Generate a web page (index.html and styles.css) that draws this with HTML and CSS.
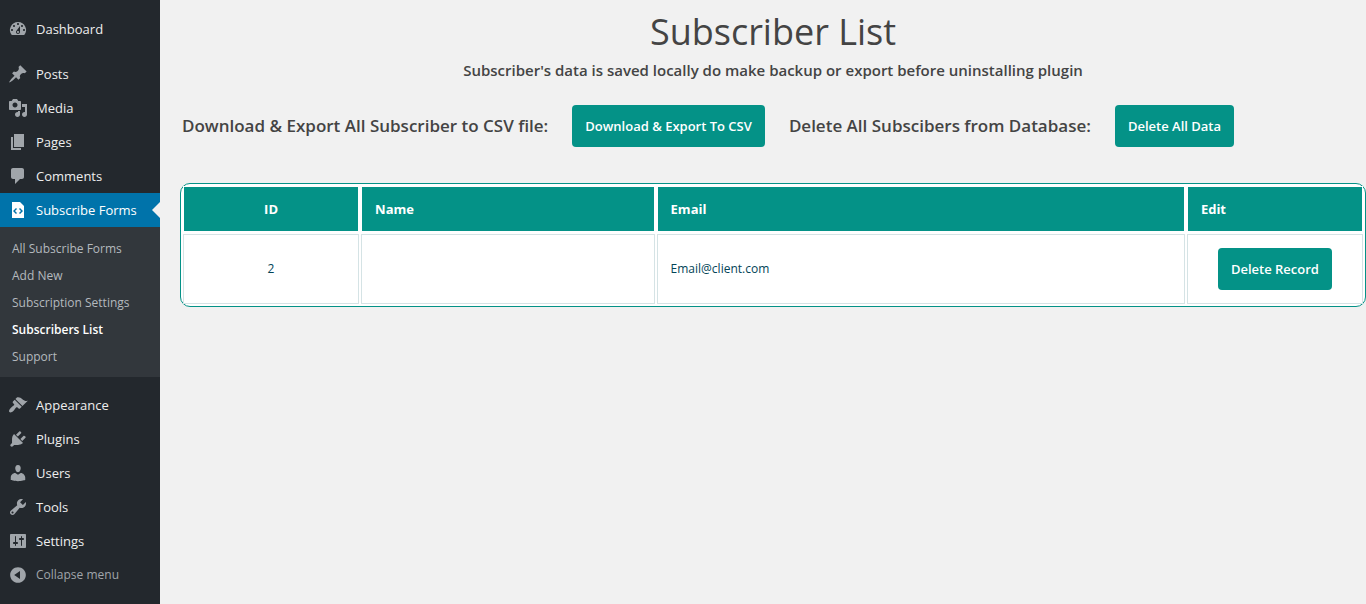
FILE: index.html
```html
<!DOCTYPE html>
<html lang="en">
<head>
<meta charset="utf-8">
<title>Subscriber List</title>
<link rel="stylesheet" href="styles.css">
</head>
<body>
<div class="admin">
  <nav class="sidebar" aria-label="Main menu">
    <ul class="menu">
      <li class="menu-item"><a class="menu-link" href="#"><svg class="icon" viewBox="0 0 20 20" aria-hidden="true"><path fill-rule="evenodd" d="M3.76 16h12.48A7.998 7.998 0 0 0 10 3a7.998 7.998 0 0 0-6.24 13zM10 4c.55 0 1 .45 1 1s-.45 1-1 1-1-.45-1-1 .45-1 1-1zM6 6c.55 0 1 .45 1 1s-.45 1-1 1-1-.45-1-1 .45-1 1-1zm8 0c.55 0 1 .45 1 1s-.45 1-1 1-1-.45-1-1 .45-1 1-1zm-5.37 5.55L12 7v6c0 1.1-.9 2-2 2s-2-.9-2-2c0-.57.24-1.08.63-1.45zM4 10c.55 0 1 .45 1 1s-.45 1-1 1-1-.45-1-1 .45-1 1-1zm12 0c.55 0 1 .45 1 1s-.45 1-1 1-1-.45-1-1 .45-1 1-1zm-5 3c0-.55-.45-1-1-1s-1 .45-1 1 .45 1 1 1 1-.45 1-1z"/></svg>Dashboard</a></li>
      <li class="menu-item group-start"><a class="menu-link" href="#"><svg class="icon" viewBox="0 0 20 20" aria-hidden="true"><path d="M10.44 3.02l1.82-1.82 6.36 6.35-1.83 1.82c-1.05-.68-2.48-.57-3.41.36l-.75.75c-.92.93-1.04 2.35-.35 3.41l-1.83 1.82-2.41-2.41-2.8 2.79c-.42.42-3.38 2.71-3.8 2.29s1.86-3.39 2.28-3.81l2.79-2.79L4.1 9.36l1.83-1.82c1.05.69 2.48.57 3.4-.36l.75-.75c.93-.92 1.05-2.35.36-3.41z"/></svg>Posts</a></li>
      <li class="menu-item"><a class="menu-link" href="#"><svg class="icon" viewBox="0 0 20 20" aria-hidden="true"><path fill-rule="evenodd" d="M13 11V4c0-.55-.45-1-1-1h-1.67L9 1H5L3.67 3H2c-.55 0-1 .45-1 1v7c0 .55.45 1 1 1h10c.55 0 1-.45 1-1zM7 4.5c1.38 0 2.5 1.12 2.5 2.5S8.38 9.5 7 9.5 4.5 8.38 4.5 7 5.62 4.5 7 4.5zM14 6h5v10.5c0 1.38-1.12 2.5-2.5 2.5S14 17.88 14 16.5s1.12-2.5 2.5-2.5c.17 0 .34.02.5.05V9h-3V6zm-4 8.05V13h2v3.5c0 1.38-1.12 2.5-2.5 2.5S7 17.88 7 16.5 8.12 14 9.5 14c.17 0 .34.02.5.05z"/></svg>Media</a></li>
      <li class="menu-item"><a class="menu-link" href="#"><svg class="icon" viewBox="0 0 20 20" aria-hidden="true"><path d="M6 15V2h10v13H6zm-1 1h8v2H3V5h2v11z"/></svg>Pages</a></li>
      <li class="menu-item"><a class="menu-link" href="#"><svg class="icon" viewBox="0 0 20 20" aria-hidden="true"><path d="M5 2h9c1.1 0 2 .9 2 2v7c0 1.1-.9 2-2 2h-2l-5 5v-5H5c-1.1 0-2-.9-2-2V4c0-1.1.9-2 2-2z"/></svg>Comments</a></li>
      <li class="menu-item"><a class="menu-link current" href="#"><svg class="icon" viewBox="0 0 20 20" aria-hidden="true"><path fill-rule="evenodd" d="M12 2l4 4v12H4V2h8zM9 13l-2-2 2-2-1-1-3 3 3 3zm3 1l3-3-3-3-1 1 2 2-2 2z"/></svg>Subscribe Forms</a>
        <ul class="submenu">
          <li><a class="submenu-link" href="#">All Subscribe Forms</a></li>
          <li><a class="submenu-link" href="#">Add New</a></li>
          <li><a class="submenu-link" href="#">Subscription Settings</a></li>
          <li><a class="submenu-link selected" href="#" aria-current="page">Subscribers List</a></li>
          <li><a class="submenu-link" href="#">Support</a></li>
        </ul>
      </li>
      <li class="menu-item group-start"><a class="menu-link" href="#"><svg class="icon" viewBox="0 0 20 20" aria-hidden="true"><path d="M14.48 11.06L7.41 3.99l1.5-1.5c.5-.56 2.3-.47 3.51.32 1.21.8 1.43 1.28 2.91 2.1 1.18.64 2.45 1.26 4.45.85zm-.71.71L6.7 4.7 4.93 6.47c-.39.39-.39 1.02 0 1.41l1.06 1.06c.39.39.39 1.03 0 1.42-.6.6-1.43 1.11-2.21 1.69-.35.26-.7.53-1.01.84C1.43 14.23.4 16.08 1.4 17.07c.99 1 2.84-.03 4.18-1.36.31-.31.58-.66.85-1.02.57-.78 1.08-1.61 1.69-2.21.39-.39 1.02-.39 1.41 0l1.06 1.06c.39.39 1.02.39 1.41 0z"/></svg>Appearance</a></li>
      <li class="menu-item"><a class="menu-link" href="#"><svg class="icon" viewBox="0 0 20 20" aria-hidden="true"><path d="M13.11 4.36L9.87 7.6 8 5.73l3.24-3.24c.35-.34 1.05-.2 1.56.32.52.51.66 1.21.31 1.55zm-8 1.77l.91-1.12 9.01 9.01-1.19.84c-.71.71-2.63 1.16-3.82 1.16H6.14L4.9 17.26c-.59.59-1.54.59-2.12 0-.59-.58-.59-1.53 0-2.12l1.24-1.24v-3.88c0-1.13.4-3.19 1.09-3.89zm7.26 3.97l3.24-3.24c.34-.35 1.04-.21 1.55.31.52.51.66 1.21.31 1.55l-3.24 3.25z"/></svg>Plugins</a></li>
      <li class="menu-item"><a class="menu-link" href="#"><svg class="icon" viewBox="0 0 20 20" aria-hidden="true"><path d="M10 9.25c-2.27 0-2.73-3.44-2.73-3.44C7 4.02 7.82 2 9.97 2c2.16 0 2.98 2.02 2.71 3.81 0 0-.41 3.44-2.68 3.44zm0 2.57L12.72 10c2.39 0 4.52 2.33 4.52 4.53v2.49s-3.65 1.13-7.24 1.13c-3.65 0-7.24-1.13-7.24-1.13v-2.49c0-2.25 1.94-4.48 4.47-4.48z"/></svg>Users</a></li>
      <li class="menu-item"><a class="menu-link" href="#"><svg class="icon" viewBox="0 0 20 20" aria-hidden="true"><path fill-rule="evenodd" d="M16.68 9.77c-1.34 1.34-3.3 1.67-4.95.99l-5.41 6.52c-.99.99-2.59.99-3.58 0s-.99-2.59 0-3.57l6.52-5.42c-.68-1.65-.35-3.61.99-4.95 1.28-1.28 3.12-1.62 4.72-1.06l-2.89 2.89 2.82 2.82 2.86-2.87c.53 1.58.18 3.39-1.08 4.65zM3.81 16.21c.4.39 1.04.39 1.43 0 .4-.4.4-1.04 0-1.43-.39-.4-1.03-.4-1.43 0-.39.39-.39 1.03 0 1.43z"/></svg>Tools</a></li>
      <li class="menu-item"><a class="menu-link" href="#"><svg class="icon" viewBox="0 0 20 20" aria-hidden="true"><path fill-rule="evenodd" d="M18 16V4c0-.55-.45-1-1-1H3c-.55 0-1 .45-1 1v12c0 .55.45 1 1 1h14c.55 0 1-.45 1-1zM8 11h1c.55 0 1 .45 1 1s-.45 1-1 1H8v1.5c0 .28-.22.5-.5.5s-.5-.22-.5-.5V13H6c-.55 0-1-.45-1-1s.45-1 1-1h1V5.5c0-.28.22-.5.5-.5s.5.22.5.5V11zm5-2h-1c-.55 0-1-.45-1-1s.45-1 1-1h1V5.5c0-.28.22-.5.5-.5s.5.22.5.5V7h1c.55 0 1 .45 1 1s-.45 1-1 1h-1v5.5c0 .28-.22.5-.5.5s-.5-.22-.5-.5V9z"/></svg>Settings</a></li>
      <li class="menu-item"><button class="menu-link collapse" type="button"><svg class="icon" viewBox="0 0 20 20" aria-hidden="true"><path fill-rule="evenodd" d="M10 2.16c4.33 0 7.84 3.51 7.84 7.84s-3.51 7.84-7.84 7.84S2.16 14.33 2.16 10 5.67 2.16 10 2.16zm2 11.72V6.12L6.18 9.97z"/></svg>Collapse menu</button></li>
    </ul>
  </nav>
  <main class="content">
    <h1 class="title">Subscriber List</h1>
    <p class="notice">Subscriber's data is saved locally do make backup or export before uninstalling plugin</p>
    <div class="actions">
      <h2 class="action-label" id="export-label">Download &amp; Export All Subscriber to CSV file:</h2>
      <button class="button" type="button" aria-describedby="export-label">Download &amp; Export To CSV</button>
      <h2 class="action-label" id="delete-label">Delete All Subscibers from Database:</h2>
      <button class="button" type="button" aria-describedby="delete-label">Delete All Data</button>
    </div>
    <table class="subscribers">
      <colgroup><col class="col-id"><col class="col-name"><col class="col-email"><col class="col-edit"></colgroup>
      <thead>
        <tr><th class="centered" scope="col">ID</th><th scope="col">Name</th><th scope="col">Email</th><th scope="col">Edit</th></tr>
      </thead>
      <tbody>
        <tr><td class="centered">2</td><td></td><td>Email@client.com</td><td class="centered"><button class="button" type="button">Delete Record</button></td></tr>
      </tbody>
    </table>
  </main>
</div>
</body>
</html>
```

FILE: styles.css
```css
* {
  box-sizing: border-box;
}

body {
  margin: 0;
  background: #f1f1f1;
  color: #444;
  font-family: "Segoe UI", "Open Sans", "Noto Sans", sans-serif;
  font-size: 13px;
}

.admin {
  display: flex;
  min-height: 100vh;
}

/* Sidebar */
.sidebar {
  flex: none;
  width: 160px;
  padding-top: 12px;
  background: #23282d;
}

.menu,
.submenu {
  margin: 0;
  padding: 0;
  list-style: none;
}

.group-start {
  margin-top: 11px;
}

.menu-link {
  position: relative;
  display: flex;
  align-items: center;
  gap: 8px;
  width: 100%;
  height: 34px;
  padding: 0 8px;
  border: 0;
  background: none;
  color: #eee;
  font: inherit;
  line-height: 18px;
  text-decoration: none;
  white-space: nowrap;
}

.icon {
  flex: none;
  width: 20px;
  height: 20px;
  fill: #a0a5aa;
}

.current {
  background: #0073aa;
  color: #fff;
}

.current .icon {
  fill: #fff;
}

/* Arrow pointing from the page to the open menu */
.current::after {
  content: "";
  position: absolute;
  top: 9px;
  right: 0;
  border: 8px solid transparent;
  border-left-width: 0;
  border-right-color: #f1f1f1;
}

.collapse {
  color: #a0a5aa;
  font-size: 12px;
}

.submenu {
  padding: 8px 0 7px;
  background: #32373c;
}

.submenu-link {
  display: block;
  padding: 5px 12px 4px;
  color: #b4b9be;
  font-size: 12px;
  line-height: 18px;
  text-decoration: none;
  white-space: nowrap;
}

.selected {
  color: #fff;
  font-weight: 600;
}

/* Page */
.content {
  flex: 1;
  min-width: 0;
  padding: 8px 0 0 20px;
}

.title {
  margin: 0;
  font-size: 36px;
  font-weight: 400;
  line-height: 48px;
  text-align: center;
}

.notice {
  margin: 3px 0 0;
  font-size: 15px;
  font-weight: 600;
  line-height: 22px;
  text-align: center;
}

.actions {
  display: flex;
  flex-wrap: wrap;
  align-items: center;
  gap: 24px;
  margin: 24px 0 36px;
  padding-left: 2px;
}

.action-label {
  margin: 0;
  font-size: 17px;
  font-weight: 600;
  line-height: 24px;
}

.button {
  padding: 12px 13px;
  border: 0;
  border-radius: 4px;
  background: #049287;
  color: #fff;
  font: inherit;
  font-size: 13px;
  font-weight: 600;
  line-height: 18px;
}

.subscribers {
  width: 100%;
  border: 1px solid #049287;
  border-radius: 10px;
  border-spacing: 2px;
  background: #fff;
}

.col-id,
.col-edit {
  width: 15%;
}

.col-name {
  width: 25%;
}

.col-email {
  width: 45%;
}

.subscribers th,
.subscribers td {
  padding: 13px;
  border: 1px solid #d5e3e5;
  text-align: left;
  line-height: 18px;
}

.subscribers th {
  border-color: #fff;
  background: #049287;
  color: #fff;
  font-weight: 700;
}

.subscribers td {
  color: #024457;
  font-size: 12px;
}

.subscribers .centered {
  text-align: center;
}
```
